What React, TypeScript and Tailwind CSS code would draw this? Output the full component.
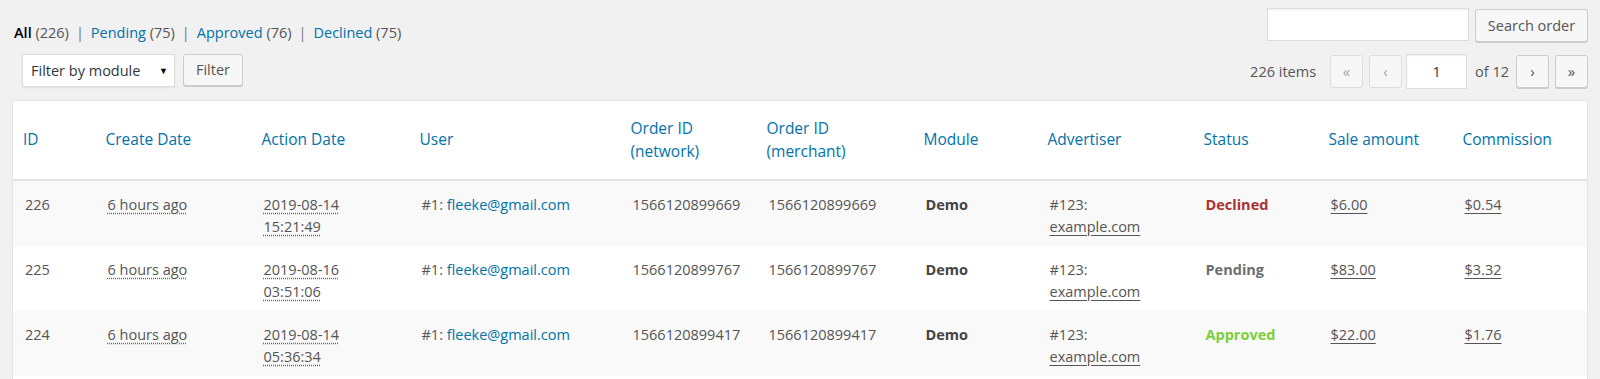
import { ReactNode } from "react";

interface Order {
  id: number;
  created: string;
  actionDate: string;
  actionTime: string;
  email: string;
  network: string;
  merchant: string;
  status: "Declined" | "Pending" | "Approved";
  sale: string;
  commission: string;
}

const orders: Order[] = [
  {
    id: 226,
    created: "6 hours ago",
    actionDate: "2019-08-14",
    actionTime: "15:21:49",
    email: "fleeke@gmail.com",
    network: "1566120899669",
    merchant: "1566120899669",
    status: "Declined",
    sale: "$6.00",
    commission: "$0.54",
  },
  {
    id: 225,
    created: "6 hours ago",
    actionDate: "2019-08-16",
    actionTime: "03:51:06",
    email: "fleeke@gmail.com",
    network: "1566120899767",
    merchant: "1566120899767",
    status: "Pending",
    sale: "$83.00",
    commission: "$3.32",
  },
  {
    id: 224,
    created: "6 hours ago",
    actionDate: "2019-08-14",
    actionTime: "05:36:34",
    email: "fleeke@gmail.com",
    network: "1566120899417",
    merchant: "1566120899417",
    status: "Approved",
    sale: "$22.00",
    commission: "$1.76",
  },
];

const statusColor = {
  Declined: "text-[#a83232]",
  Pending: "text-[#6b6e72]",
  Approved: "text-[#7ad03a]",
};

const headers: { label: ReactNode; width: string }[] = [
  { label: "ID", width: "w-[83px]" },
  { label: "Create Date", width: "w-[156px]" },
  { label: "Action Date", width: "w-[158px]" },
  { label: "User", width: "w-[211px]" },
  { label: <>Order ID<br />(network)</>, width: "w-[136px]" },
  { label: <>Order ID<br />(merchant)</>, width: "w-[157px]" },
  { label: "Module", width: "w-[124px]" },
  { label: "Advertiser", width: "w-[156px]" },
  { label: "Status", width: "w-[125px]" },
  { label: "Sale amount", width: "w-[134px]" },
  { label: "Commission", width: "" },
];

function Dotted({ children }: { children: ReactNode }) {
  return (
    <span className="underline decoration-dotted decoration-[#666] underline-offset-[3px]">
      {children}
    </span>
  );
}

function PageButton({ children, disabled }: { children: ReactNode; disabled?: boolean }) {
  return (
    <span
      className={
        disabled
          ? "flex h-[33px] w-[33px] items-center justify-center rounded-[3px] border border-[#ddd] bg-[#f7f7f7] text-[15px] text-[#a0a5aa]"
          : "flex h-[33px] w-[33px] items-center justify-center rounded-[3px] border border-[#ccc] bg-[#f7f7f7] text-[15px] text-[#555] shadow-[0_1px_0_#ccc]"
      }
    >
      {children}
    </span>
  );
}

export default function App() {
  return (
    <div
      className="min-h-screen bg-[#f1f1f1] px-3 pt-2 text-[14.5px] text-[#555]"
      style={{ fontFamily: '"Open Sans", "Noto Sans", sans-serif' }}
    >
      <div className="flex justify-between">
        <ul className="flex pt-[14px] pl-[2px] leading-[22px]">
          <li>
            <span className="font-semibold text-black">All</span> (226)
            <span className="px-[7px] text-[#72777c]">|</span>
          </li>
          <li>
            <span className="text-[#0073aa]">Pending</span> (75)
            <span className="px-[7px] text-[#72777c]">|</span>
          </li>
          <li>
            <span className="text-[#0073aa]">Approved</span> (76)
            <span className="px-[7px] text-[#72777c]">|</span>
          </li>
          <li>
            <span className="text-[#0073aa]">Declined</span> (75)
          </li>
        </ul>
        <div className="flex gap-[6px]">
          <div className="h-[33px] w-[202px] border border-[#ddd] bg-white shadow-[inset_0_1px_2px_rgba(0,0,0,0.07)]" />
          <button className="mt-px h-[33px] w-[113px] rounded-[3px] border border-[#ccc] bg-[#f7f7f7] text-[#555] shadow-[0_1px_0_#ccc]">
            Search order
          </button>
        </div>
      </div>

      <div className="mt-[10px] flex items-start justify-between">
        <div className="flex gap-2 pl-[10px]">
          <div className="flex h-[33px] w-[153px] items-center justify-between border border-[#ddd] bg-white pl-[8px] pr-[6px] text-[#32373c] shadow-[0_1px_2px_rgba(0,0,0,0.07)]">
            <span>Filter by module</span>
            <span className="text-[9px] text-black">▼</span>
          </div>
          <button className="h-[32px] w-[60px] rounded-[3px] border border-[#ccc] bg-[#f7f7f7] text-[#555] shadow-[0_1px_0_#ccc]">
            Filter
          </button>
        </div>
        <div className="flex items-center">
          <span className="mr-[14px]">226 items</span>
          <PageButton disabled>«</PageButton>
          <span className="w-[6px]" />
          <PageButton disabled>‹</PageButton>
          <div className="ml-[4px] flex h-[35px] w-[61px] items-center justify-center border border-[#ddd] bg-white text-[#32373c] shadow-[inset_0_1px_2px_rgba(0,0,0,0.07)]">
            1
          </div>
          <span className="ml-[8px] mr-[7px]">of 12</span>
          <PageButton>›</PageButton>
          <span className="w-[6px]" />
          <PageButton>»</PageButton>
        </div>
      </div>

      <table className="mt-[11px] w-full table-fixed border border-[#e5e5e5] bg-white shadow-[0_1px_1px_rgba(0,0,0,0.04)]">
        <colgroup>
          {headers.map((h, i) => (
            <col key={i} className={h.width} />
          ))}
        </colgroup>
        <thead>
          <tr className="h-[79px] border-b-2 border-[#e5e5e5]">
            {headers.map((h, i) => (
              <th
                key={i}
                className="px-[10px] text-left align-middle text-[15.5px] font-normal leading-[23px] text-[#0073aa]"
              >
                {h.label}
              </th>
            ))}
          </tr>
        </thead>
        <tbody>
          {orders.map((o, i) => (
            <tr key={o.id} className={i % 2 === 0 ? "h-[65px] bg-[#f9f9f9]" : "h-[65px] bg-white"}>
              <td className="px-[12px] pt-[13px] pb-[8px] align-top leading-[22px]">{o.id}</td>
              <td className="px-[12px] pt-[13px] pb-[8px] align-top leading-[22px]">
                <Dotted>{o.created}</Dotted>
              </td>
              <td className="px-[12px] pt-[13px] pb-[8px] align-top leading-[22px]">
                <Dotted>{o.actionDate}</Dotted>
                <br />
                <Dotted>{o.actionTime}</Dotted>
              </td>
              <td className="px-[12px] pt-[13px] pb-[8px] align-top leading-[22px]">
                #1: <span className="text-[#0073aa]">{o.email}</span>
              </td>
              <td className="px-[12px] pt-[13px] pb-[8px] align-top leading-[22px]">{o.network}</td>
              <td className="px-[12px] pt-[13px] pb-[8px] align-top leading-[22px]">{o.merchant}</td>
              <td className="px-[12px] pt-[13px] pb-[8px] align-top font-bold leading-[22px] text-[#444]">Demo</td>
              <td className="px-[12px] pt-[13px] pb-[8px] align-top leading-[22px]">
                #123:
                <br />
                <span className="underline underline-offset-[3px]">example.com</span>
              </td>
              <td className={`px-[12px] pt-[13px] pb-[8px] align-top font-bold leading-[22px] ${statusColor[o.status]}`}>
                {o.status}
              </td>
              <td className="px-[12px] pt-[13px] pb-[8px] align-top leading-[22px]">
                <span className="underline underline-offset-[3px]">{o.sale}</span>
              </td>
              <td className="px-[12px] pt-[13px] pb-[8px] align-top leading-[22px]">
                <span className="underline underline-offset-[3px]">{o.commission}</span>
              </td>
            </tr>
          ))}
          <tr className="h-[12px] bg-white">
            <td colSpan={11} />
          </tr>
        </tbody>
      </table>
    </div>
  );
}
